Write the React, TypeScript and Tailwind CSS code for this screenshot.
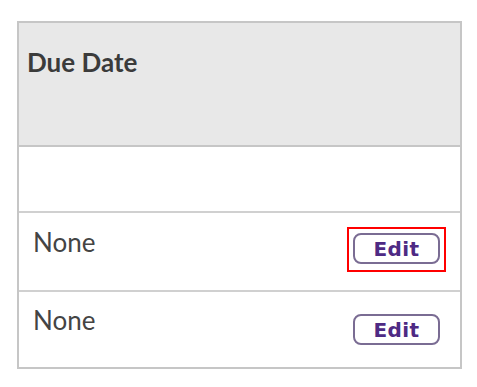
import React from "react";

function EditButton() {
  return (
    <button
      className="flex h-[31px] w-[87px] items-center justify-center rounded-[8px] border-2 border-[#7a6c93] bg-white pt-[1px] text-[20px] font-bold tracking-[0.4px] text-[#4e2a84]"
      style={{ fontFamily: '"DejaVu Sans", sans-serif' }}
    >
      Edit
    </button>
  );
}

export default function App() {
  return (
    <div className="min-h-[387px] w-[477px] bg-white pl-[17px] pt-[21px]" style={{ fontFamily: "Lato, sans-serif" }}>
      <div className="w-[445px] border-2 border-[#c6c6c6]">
        <div className="h-[124px] border-b-2 border-[#c6c6c6] bg-[#e8e8e8] pl-[8px] pt-[24px]">
          <span className="text-[26px] font-bold leading-[31px] text-[#3b3b3b]">Due Date</span>
        </div>
        <div className="h-[66px] border-b-2 border-[#d0d0d0]" />
        <div className="flex h-[79px] items-start justify-between border-b-2 border-[#d0d0d0] pl-[14px] pr-[14px] pt-[14px]">
          <span className="text-[26px] leading-[31px] text-[#444444]">None</span>
          <div className="border-2 border-[#ff0000] p-[4px] pb-[6px]">
            <EditButton />
          </div>
        </div>
        <div className="flex h-[75px] items-start justify-between pl-[14px] pr-[20px] pt-[13px]">
          <span className="text-[26px] leading-[31px] text-[#444444]">None</span>
          <div className="mt-[9px]">
            <EditButton />
          </div>
        </div>
      </div>
    </div>
  );
}
